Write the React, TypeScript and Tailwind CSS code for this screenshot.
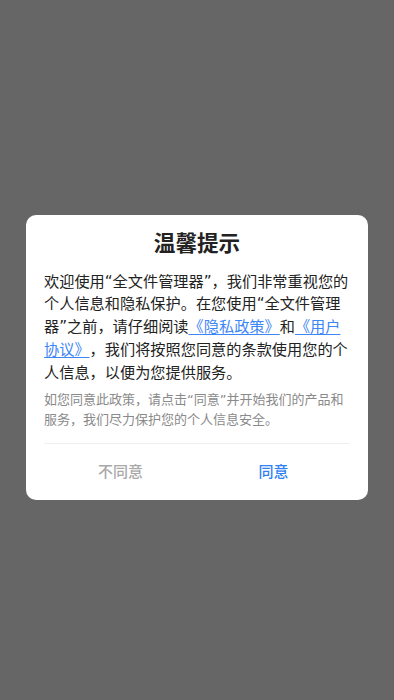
import React from "react";

export default function App() {
  return (
    <div
      className="w-[394px] h-[700px] bg-[#666666] flex flex-col [text-spacing-trim:space-all]"
      style={{ fontFamily: '"DejaVu Sans", "Noto Sans CJK SC", sans-serif' }}
    >
      <div className="h-[215px]" />
      <div className="mx-[26px] bg-white rounded-[10px] px-[18px] pt-[14px] flex flex-col">
        <div className="text-center text-[21.6px] leading-[30px] font-bold text-[#222222]">
          温馨提示
        </div>
        <p className="mt-[11.6px] text-[15.2px] leading-[22.8px] text-[#222222]">
          欢迎使用“全文件管理器”，我们非常重视您的个人信息和隐私保护。在您使用“全文件管理器”之前，请仔细阅读
          <span className="text-[#3d86f5] underline underline-offset-2">《隐私政策》</span>和
          <span className="text-[#3d86f5] underline underline-offset-2">《用户协议》</span>，我们将按照您同意的条款使用您的个人信息，以便为您提供服务。
        </p>
        <p className="mt-[5.4px] text-[13px] leading-[20px] text-[#8a8a8a]">
          如您同意此政策，请点击“同意”并开始我们的产品和服务，我们尽力保护您的个人信息安全。
        </p>
        <div className="mt-[13px] h-px bg-[#efefef]" />
        <div className="flex h-[56px] items-center">
          <div className="flex-1 text-center text-[15px] font-medium text-[#a9a9a9]">不同意</div>
          <div className="flex-1 text-center text-[15px] font-medium text-[#3081f5]">同意</div>
        </div>
      </div>
    </div>
  );
}
